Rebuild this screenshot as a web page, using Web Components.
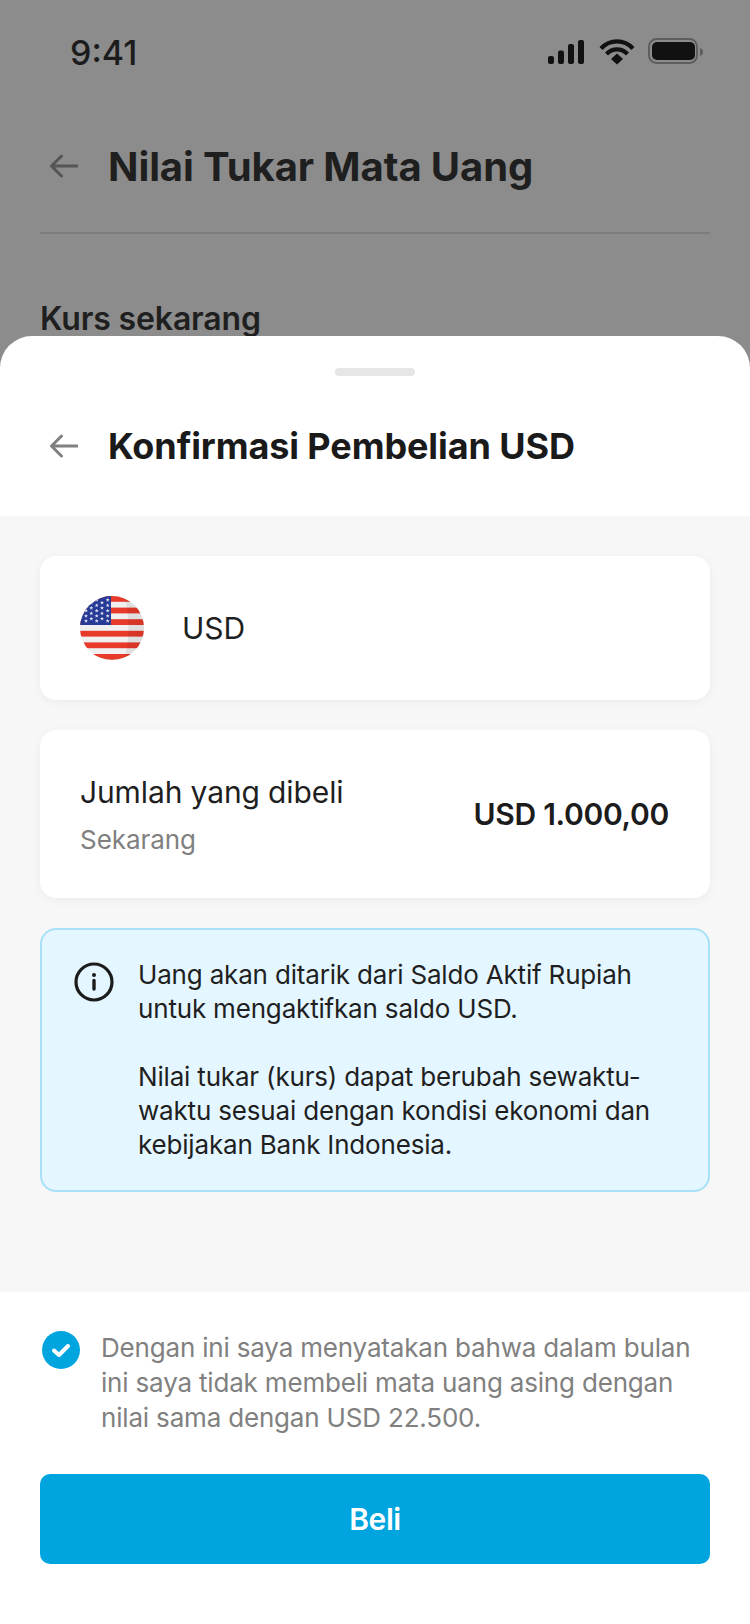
<!DOCTYPE html>
<html lang="id">
<head>
<meta charset="utf-8">
<title>Konfirmasi Pembelian USD</title>
<style>
    html, body {
        margin: 0;
        padding: 0;
        background: #8c8c8c;
    }

    body {
        font-family: Inter, "Liberation Sans", sans-serif;
    }
</style>
</head>
<body>
<app-screen>
    <status-bar slot="backdrop"></status-bar>
    <page-title slot="backdrop" divider>Nilai Tukar Mata Uang</page-title>
    <section-label slot="backdrop">Kurs sekarang</section-label>

    <page-title slot="sheet-head">Konfirmasi Pembelian USD</page-title>

    <info-card slot="sheet-body" style="--card-height: 144px">
        <flag-usd></flag-usd>
        <span class="currency" style="font-size: 30px; color: #1f1f1f; margin-left: 38px">USD</span>
    </info-card>
    <info-card slot="sheet-body" style="--card-height: 168px; --card-gap: 30px">
        <amount-row label="Jumlah yang dibeli" sub="Sekarang" value="USD 1.000,00"></amount-row>
    </info-card>
    <notice-box slot="sheet-body">
        <p>Uang akan ditarik dari Saldo Aktif Rupiah untuk mengaktifkan saldo USD.</p>
        <p>Nilai tukar (kurs) dapat berubah sewaktu-waktu sesuai dengan kondisi ekonomi dan kebijakan Bank Indonesia.</p>
    </notice-box>

    <confirm-check slot="sheet-foot">Dengan ini saya menyatakan bahwa dalam bulan ini saya tidak membeli mata uang asing dengan nilai sama dengan USD 22.500.</confirm-check>
    <primary-button slot="sheet-foot">Beli</primary-button>
</app-screen>

<script>
(function () {
    // small helper, every element here is just a template in an open shadow root
    function define(name, html) {
        let template = document.createElement("template");
        template.innerHTML = html;
        customElements.define(name, class extends HTMLElement {
            constructor() {
                super();
                this.attachShadow({ mode: "open" }).appendChild(template.content.cloneNode(true));
            }
        });
    }

    define("app-screen", `
<style>
    :host {
        display: block;
        position: relative;
        width: 750px;
        height: 1624px;
        overflow: hidden;
        background: #8c8c8c;
    }

    /* the sheet lies over the dimmed page */
    #sheet {
        position: absolute;
        left: 0;
        right: 0;
        top: 336px;
        bottom: 0;
        display: flex;
        flex-direction: column;
        background: #fff;
        border-radius: 32px 32px 0 0;
    }

    #handle {
        width: 80px;
        height: 8px;
        margin: 32px auto 0;
        border-radius: 4px;
        background: #e6e6e6;
    }

    #head {
        height: 140px;
        display: flex;
        align-items: center;
    }

    #body {
        height: 776px;
        box-sizing: border-box;
        padding: 40px 40px 0;
        background: #f7f7f7;
    }

    #foot {
        padding: 38px 40px 0;
    }
</style>
<slot name="backdrop"></slot>
<div id="sheet">
    <div id="handle"></div>
    <div id="head"><slot name="sheet-head"></slot></div>
    <div id="body"><slot name="sheet-body"></slot></div>
    <div id="foot"><slot name="sheet-foot"></slot></div>
</div>
`);

    define("status-bar", `
<style>
    :host {
        display: flex;
        height: 104px;
        box-sizing: border-box;
        padding: 0 46px 0 70px;
        align-items: center;
        justify-content: space-between;
        color: #1c1c1c;
    }

    span {
        font-size: 34px;
        font-weight: 500;
    }

    svg {
        display: block;
    }
</style>
<span>9:41</span>
<svg width="156" height="28" viewBox="548 38 156 28">
    <rect x="548" y="56" width="6" height="8" rx="2" fill="#111"/>
    <rect x="558" y="50.500" width="6" height="13.500" rx="2" fill="#111"/>
    <rect x="568" y="44" width="6" height="20" rx="2" fill="#111"/>
    <rect x="578" y="40" width="6" height="24" rx="2" fill="#111"/>
    <path d="M601 48.500 C610 39 624 39 633 48.500" fill="none" stroke="#111" stroke-width="4.200"/>
    <path d="M606.500 54 C612.500 47.700 621.500 47.700 627.500 54" fill="none" stroke="#111" stroke-width="4.200"/>
    <path d="M611 59 L617 53.500 L623 59 L617 64.500 Z" fill="#111"/>
    <rect x="649" y="39" width="48" height="24" rx="7.500" fill="none" stroke="#5e5e5e" stroke-width="2"/>
    <rect x="652" y="42" width="43" height="18" rx="5" fill="#111"/>
    <path d="M700 48 C702.500 49 703 50 703 52 C703 54 702.500 55 700 56 Z" fill="#5e5e5e"/>
</svg>
`);

    define("page-title", `
<style>
    :host {
        display: block;
        box-sizing: border-box;
        width: 100%;
    }

    #row {
        display: flex;
        align-items: center;
        padding-left: 50px;
        color: #1a1a1a;
        font-size: 36px;
        font-weight: 700;
        letter-spacing: -0.1px;
    }

    svg {
        flex: none;
        display: block;
        margin-right: 30px;
        stroke: #808080;
    }

    :host([divider]) {
        height: 130px;
        margin: 0 40px;
        width: auto;
        border-bottom: 2px solid #7d7d7d;
    }

    :host([divider]) #row {
        height: 124px;
        padding-left: 10px;
        color: #1f1f1f;
        font-size: 40px;
        letter-spacing: -0.1px;
    }

    :host([divider]) svg {
        stroke: #555;
    }
</style>
<div id="row">
    <svg width="28" height="24" viewBox="0 0 28 24" fill="none" stroke-width="3" stroke-linecap="round" stroke-linejoin="round">
        <path d="M1.500 12 H27 M11.500 2 L1.500 12 L11.500 22"/>
    </svg>
    <slot></slot>
</div>
`);

    define("section-label", `
<style>
    :host {
        display: block;
        margin: 0 40px;
        padding-top: 65px;
        font-size: 32px;
        line-height: 40px;
        font-weight: 600;
        letter-spacing: -0.15px;
        color: #1f1f1f;
    }
</style>
<slot></slot>
`);

    define("info-card", `
<style>
    :host {
        display: flex;
        align-items: center;
        box-sizing: border-box;
        height: var(--card-height);
        margin-top: var(--card-gap, 0);
        padding: 0 40px;
        background: #fff;
        border-radius: 16px;
        box-shadow: 0 2px 10px rgba(0, 0, 0, 0.05);
    }
</style>
<slot></slot>
`);

    class FlagUsd extends HTMLElement {
        constructor() {
            super();
            // staggered star field, 5 columns read off the reference
            let stars = [
                [27.7, [4, 9.3, 14.7, 20, 25]],
                [22, [6.7, 12, 17.3, 22.7]],
                [16.7, [4, 9.3, 14.7, 20, 25]],
                [11.3, [6.7, 12, 17.3, 22.7]],
                [6, [14.7, 20, 25]]
            ].map(([x, rows]) => rows.map(y => `<use href="#star" x="${x}" y="${y}"/>`).join("")).join("");
            let stripes = [0, 11.6, 23.2, 34.8, 46.4, 58].map(y => `<rect y="${y}" width="64" height="5.800" fill="#e83a2a"/>`).join("");
            this.attachShadow({ mode: "open" }).innerHTML = `
<style>
    :host {
        display: block;
        flex: none;
        width: 64px;
        height: 64px;
    }

    svg {
        display: block;
    }
</style>
<svg width="64" height="64" viewBox="0 0 64 64">
    <defs>
        <clipPath id="disc"><circle cx="32" cy="32" r="32"/></clipPath>
        <path id="star" d="M0 -2 L.6 -.65 L2 -.65 L.9 .25 L1.300 1.700 L0 .85 L-1.300 1.700 L-.9 .25 L-2 -.65 L-.6 -.65 Z" fill="#dfe2f0"/>
    </defs>
    <g clip-path="url(#disc)">
        <rect width="64" height="64" fill="#f0f0f0"/>
        ${stripes}
        <path d="M44 0 C50 20 50 44 44 64 H64 V0 Z" fill="#000" opacity="0.07"/>
        <rect width="31" height="29" fill="#263a96"/>
        ${stars}
    </g>
</svg>
`;
        }
    }
    customElements.define("flag-usd", FlagUsd);

    class AmountRow extends HTMLElement {
        constructor() {
            super();
            this.attachShadow({ mode: "open" }).innerHTML = `
<style>
    :host {
        display: flex;
        flex: 1;
        align-items: center;
        justify-content: space-between;
    }

    #label {
        padding-top: 3px;
        font-size: 30px;
        line-height: 36px;
        letter-spacing: -0.12px;
        color: #1f1f1f;
    }

    #sub {
        margin-top: 13px;
        font-size: 26px;
        line-height: 34px;
        letter-spacing: -0.05px;
        color: #808080;
    }

    #value {
        margin-right: 1px;
        font-size: 30px;
        font-weight: 600;
        letter-spacing: -0.3px;
        color: #1c1c1c;
    }
</style>
<div>
    <div id="label">${this.getAttribute("label")}</div>
    <div id="sub">${this.getAttribute("sub")}</div>
</div>
<div id="value">${this.getAttribute("value")}</div>
`;
        }
    }
    customElements.define("amount-row", AmountRow);

    define("notice-box", `
<style>
    :host {
        display: flex;
        box-sizing: border-box;
        height: 264px;
        margin-top: 30px;
        padding: 28px 32px 0;
        gap: 24px;
        background: #e4f6ff;
        border: 2px solid #a8e0f8;
        border-radius: 16px;
        font-size: 26px;
        line-height: 34px;
        letter-spacing: -0.18px;
        color: #1f1f1f;
    }

    svg {
        flex: none;
        display: block;
        margin-top: 4px;
    }

    ::slotted(p) {
        margin: 0 0 34px;
    }
</style>
<svg width="40" height="40" viewBox="0 0 40 40" fill="none" stroke="#1c1c1c" stroke-width="3.200" stroke-linecap="round">
    <circle cx="20" cy="20" r="18"/>
    <path d="M20 18.500 V27" stroke-width="3.400"/>
    <path d="M20 13 V13.100" stroke-width="4"/>
</svg>
<div><slot></slot></div>
`);

    define("confirm-check", `
<style>
    :host {
        display: flex;
        gap: 21px;
        font-size: 26px;
        line-height: 35px;
        letter-spacing: -0.18px;
        color: #808080;
    }

    svg {
        flex: none;
        display: block;
        margin: 1px 0 0 2px;
    }
</style>
<svg width="38" height="38" viewBox="0 0 38 38">
    <circle cx="19" cy="19" r="19" fill="#00a5e0"/>
    <path d="M12 19.500 L17 24 L26 15" fill="none" stroke="#fff" stroke-width="4" stroke-linecap="round" stroke-linejoin="round"/>
</svg>
<div><slot></slot></div>
`);

    define("primary-button", `
<style>
    :host {
        display: flex;
        align-items: center;
        justify-content: center;
        height: 90px;
        margin-top: 39px;
        background: #00a5e0;
        border-radius: 10px;
        color: #fff;
        font-size: 30px;
        font-weight: 600;
        letter-spacing: -0.4px;
    }
</style>
<slot></slot>
`);
})();
</script>
</body>
</html>
